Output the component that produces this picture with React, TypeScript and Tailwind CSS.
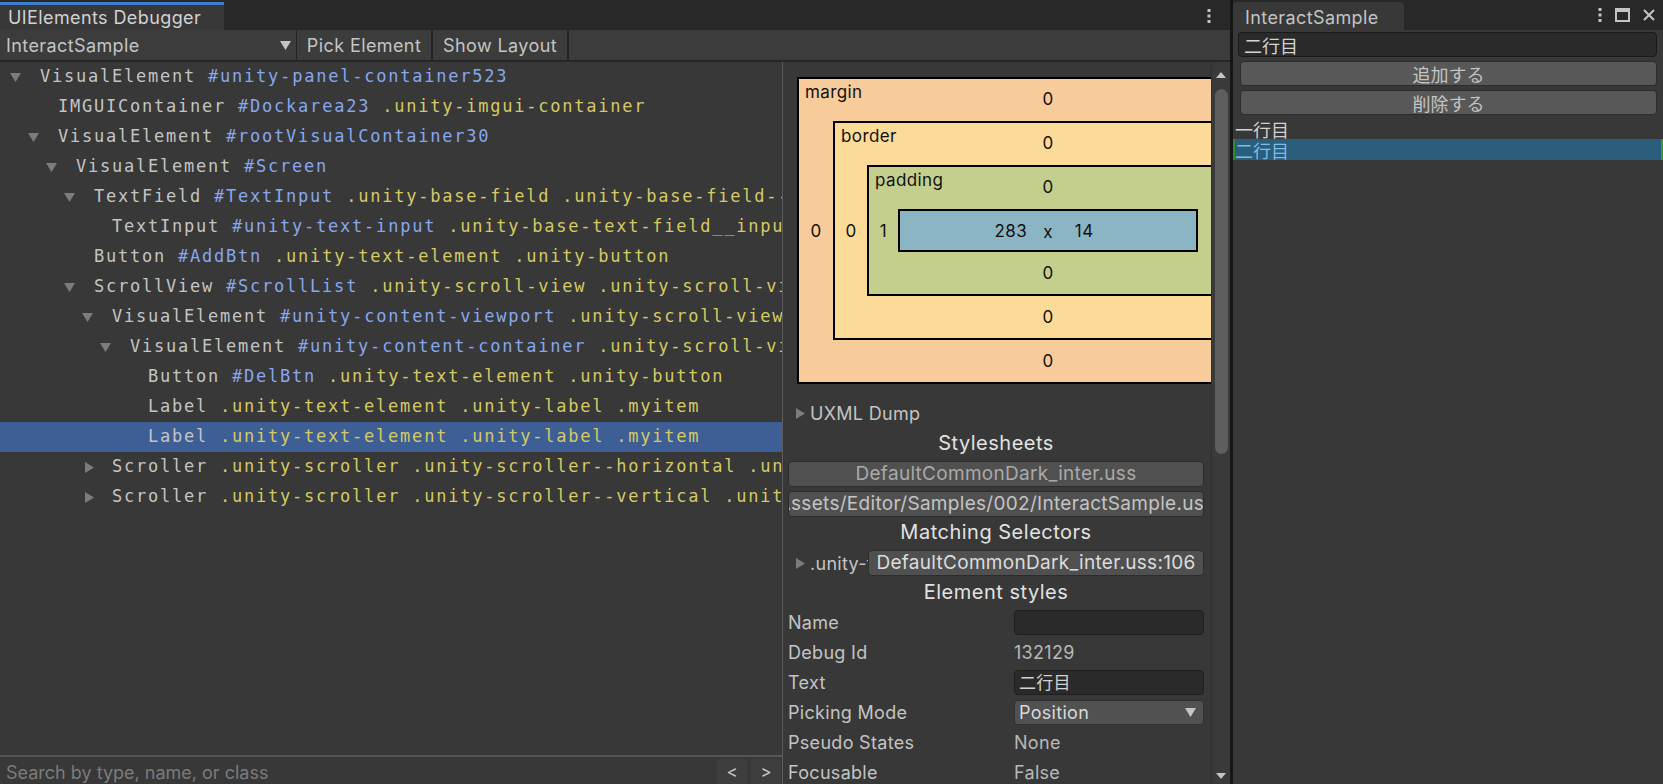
import React from 'react';

type TreeNode = {
  d: number;
  arrow?: 'down' | 'right';
  type: string;
  id?: string;
  cls?: string;
  selected?: boolean;
};

const tree: TreeNode[] = [
  { d: 0, arrow: 'down', type: 'VisualElement', id: '#unity-panel-container523' },
  { d: 1, type: 'IMGUIContainer', id: '#Dockarea23', cls: '.unity-imgui-container' },
  { d: 1, arrow: 'down', type: 'VisualElement', id: '#rootVisualContainer30' },
  { d: 2, arrow: 'down', type: 'VisualElement', id: '#Screen' },
  {
    d: 3,
    arrow: 'down',
    type: 'TextField',
    id: '#TextInput',
    cls: '.unity-base-field .unity-base-field--no-label .unity-base-text-field .unity-text-field',
  },
  { d: 4, type: 'TextInput', id: '#unity-text-input', cls: '.unity-base-text-field__input .unity-text-field__input' },
  { d: 3, type: 'Button', id: '#AddBtn', cls: '.unity-text-element .unity-button' },
  { d: 3, arrow: 'down', type: 'ScrollView', id: '#ScrollList', cls: '.unity-scroll-view .unity-scroll-view--vertical' },
  { d: 4, arrow: 'down', type: 'VisualElement', id: '#unity-content-viewport', cls: '.unity-scroll-view__content-viewport' },
  { d: 5, arrow: 'down', type: 'VisualElement', id: '#unity-content-container', cls: '.unity-scroll-view__content-container' },
  { d: 6, type: 'Button', id: '#DelBtn', cls: '.unity-text-element .unity-button' },
  { d: 6, type: 'Label', cls: '.unity-text-element .unity-label .myitem' },
  { d: 6, type: 'Label', cls: '.unity-text-element .unity-label .myitem', selected: true },
  { d: 4, arrow: 'right', type: 'Scroller', cls: '.unity-scroller .unity-scroller--horizontal .unity-scroller__horizontal' },
  { d: 4, arrow: 'right', type: 'Scroller', cls: '.unity-scroller .unity-scroller--vertical .unity-scroller__vertical' },
];

function Down({ color = '#7c7c7c' }: { color?: string }) {
  return (
    <svg width="11" height="9" viewBox="0 0 11 9" className="shrink-0">
      <path d="M0 0H11L5.5 9Z" fill={color} />
    </svg>
  );
}

function Right({ color = '#7c7c7c' }: { color?: string }) {
  return (
    <svg width="9" height="11" viewBox="0 0 9 11" className="shrink-0">
      <path d="M0 0L9 5.5L0 11Z" fill={color} />
    </svg>
  );
}

function Kebab() {
  return (
    <svg width="4" height="14" viewBox="0 0 4 14">
      <rect x="0.5" y="0" width="3" height="3" fill="#c4c4c4" />
      <rect x="0.5" y="5.5" width="3" height="3" fill="#c4c4c4" />
      <rect x="0.5" y="11" width="3" height="3" fill="#c4c4c4" />
    </svg>
  );
}

function TreeRow({ n }: { n: TreeNode }) {
  return (
    <div className={`flex h-[30px] shrink-0 items-center whitespace-pre ${n.selected ? 'bg-[#3e5f96]' : ''}`}>
      <div className="shrink-0" style={{ width: n.d * 18 }} />
      <div className={`flex w-[40px] shrink-0 items-center ${n.arrow === 'right' ? 'pl-[13px]' : 'pl-[10px]'}`}>
        {n.arrow === 'down' && <Down />}
        {n.arrow === 'right' && <Right />}
      </div>
      <span className="text-[#c4c4c4]">{n.type}</span>
      {n.id && <span className="text-[#87a7ee]"> {n.id}</span>}
      {n.cls && <span className="text-[#d5ca64]"> {n.cls}</span>}
    </div>
  );
}

function Layer({
  label,
  bg,
  side,
  vals,
  children,
}: {
  label: string;
  bg: string;
  side: string;
  vals: [string, string, string, string];
  children: React.ReactNode;
}) {
  return (
    <div className={`flex flex-col border-2 border-black ${bg}`}>
      <div className="grid h-[42px] grid-cols-[1fr_auto_1fr]">
        <span className="pl-[6px] pt-[3px]">{label}</span>
        <span className="self-center pb-[2px]">{vals[0]}</span>
        <span />
      </div>
      <div className="flex">
        <div className={`flex shrink-0 items-center justify-center ${side}`}>{vals[3]}</div>
        <div className="flex-1">{children}</div>
        <div className={`flex shrink-0 items-center justify-center ${side}`}>{vals[1]}</div>
      </div>
      <div className="flex h-[42px] items-center justify-center">{vals[2]}</div>
    </div>
  );
}

function BoxModel() {
  return (
    <div className="flex w-[502px] shrink-0 flex-col text-[17px] leading-[20px] tracking-[0.4px] text-[#111]">
      <Layer label="margin" bg="bg-[#f8cb9b]" side="w-[34px]" vals={['0', '', '0', '0']}>
        <Layer label="border" bg="bg-[#fcdb99]" side="w-[32px]" vals={['0', '', '0', '0']}>
          <Layer label="padding" bg="bg-[#c5cf8d]" side="w-[29px]" vals={['0', '', '0', '1']}>
            <div className="grid h-[43px] grid-cols-[1fr_auto_1fr] items-center border-2 border-black bg-[#8cb5c4]">
              <span className="pr-[16px] text-right">283</span>
              <span className="pt-[3px]">x</span>
              <span className="pl-[22px]">14</span>
            </div>
          </Layer>
        </Layer>
      </Layer>
    </div>
  );
}

function PropRow({ label, children }: { label: string; children: React.ReactNode }) {
  return (
    <div className="flex h-[30px] shrink-0 items-center">
      <span className="w-[226px] shrink-0 text-[#c4c4c4]">{label}</span>
      <div className="flex flex-1 items-center">{children}</div>
    </div>
  );
}

function Inspector() {
  return (
    <div className="flex min-w-0 flex-1 flex-col overflow-hidden pl-[5px] pr-[7px] text-[18px] tracking-[0.3px]">
      <div className="flex pl-[9px] pt-[15px]">
        <BoxModel />
      </div>
      <div className="mt-[14px] flex h-[30px] shrink-0 items-center gap-[5px] pl-[8px] text-[#c4c4c4]">
        <Right />
        <span>UXML Dump</span>
      </div>
      <div className="flex h-[30px] shrink-0 items-center justify-center text-[20px] tracking-[0.5px] text-[#e2e2e2]">
        Stylesheets
      </div>
      <div className="mt-[3px] flex h-[26px] shrink-0 items-center justify-center overflow-hidden whitespace-nowrap rounded-[4px] border border-[#2c2c2c] bg-[#505050] text-[19px] tracking-[0.3px] text-[#a9a9a9]">
        DefaultCommonDark_inter.uss
      </div>
      <div className="mt-[4px] flex h-[26px] shrink-0 items-center justify-center overflow-hidden whitespace-nowrap rounded-[4px] border border-[#2c2c2c] bg-[#505050] text-[19px] tracking-[0.3px] text-[#c4c4c4]">
        Assets/Editor/Samples/002/InteractSample.uss
      </div>
      <div className="flex h-[30px] shrink-0 items-center justify-center text-[20px] tracking-[0.5px] text-[#e2e2e2]">
        Matching Selectors
      </div>
      <div className="mt-[3px] flex h-[26px] shrink-0 items-center">
        <div className="flex w-[80px] shrink-0 items-center gap-[5px] overflow-hidden whitespace-nowrap pl-[8px] text-[#c4c4c4]">
          <Right />
          <span>.unity-text-element</span>
        </div>
        <div className="flex h-full flex-1 items-center justify-center overflow-hidden whitespace-nowrap rounded-[4px] border border-[#2c2c2c] bg-[#505050] text-[19px] tracking-[0.3px] text-[#dcdcdc]">
          DefaultCommonDark_inter.uss:106
        </div>
      </div>
      <div className="mt-[1px] flex h-[30px] shrink-0 items-center justify-center text-[20px] tracking-[0.5px] text-[#e2e2e2]">
        Element styles
      </div>
      <PropRow label="Name">
        <div className="h-[25px] flex-1 rounded-[4px] border border-[#1f1f1f] bg-[#2a2a2a]" />
      </PropRow>
      <PropRow label="Debug Id">
        <span className="text-[#b8b8b8]">132129</span>
      </PropRow>
      <PropRow label="Text">
        <div className="flex h-[25px] flex-1 items-center rounded-[4px] border border-[#1f1f1f] bg-[#2a2a2a] pl-[4px] font-['Noto_Sans_CJK_JP',sans-serif] text-[17px] text-[#d2d2d2]">
          二行目
        </div>
      </PropRow>
      <PropRow label="Picking Mode">
        <div className="flex h-[25px] flex-1 items-center justify-between rounded-[4px] border border-[#303030] bg-[#515151] pl-[4px] pr-[7px] text-[#d8d8d8]">
          <span>Position</span>
          <Down color="#c4c4c4" />
        </div>
      </PropRow>
      <PropRow label="Pseudo States">
        <span className="text-[#b8b8b8]">None</span>
      </PropRow>
      <PropRow label="Focusable">
        <span className="text-[#b8b8b8]">False</span>
      </PropRow>
    </div>
  );
}

function ScrollBar() {
  return (
    <div className="flex w-[19px] shrink-0 flex-col items-center border-l border-[#313131] bg-[#3a3a3a]">
      <div className="mt-[10px]">
        <svg width="10" height="6" viewBox="0 0 10 6">
          <path d="M0 6L5 0L10 6Z" fill="#c4c4c4" />
        </svg>
      </div>
      <div className="mt-[11px] h-[365px] w-[13px] rounded-full bg-[#5e5e5e]" />
      <div className="flex-1" />
      <div className="mb-[5px]">
        <svg width="10" height="6" viewBox="0 0 10 6">
          <path d="M0 0L10 0L5 6Z" fill="#c4c4c4" />
        </svg>
      </div>
    </div>
  );
}

function DebuggerWindow() {
  return (
    <div className="flex w-[1230px] shrink-0 flex-col">
      <div className="flex h-[30px] shrink-0 items-end bg-[#282828]">
        <div className="flex h-[28px] w-[224px] items-center border-t-[3px] border-[#3d7fcc] bg-[#383838] pl-[8px] text-[18px] tracking-[0.4px] text-[#d2d2d2]">
          UIElements Debugger
        </div>
        <div className="flex-1" />
        <div className="mb-[7px] mr-[19px]">
          <Kebab />
        </div>
      </div>
      <div className="flex h-[30px] shrink-0 bg-[#3c3c3c] text-[18px] tracking-[0.4px] text-[#c4c4c4]">
        <div className="flex w-[297px] items-center justify-between border-r border-[#242424] pl-[6px] pr-[5px]">
          <span>InteractSample</span>
          <Down color="#c4c4c4" />
        </div>
        <div className="flex w-[136px] items-center justify-center border-r-2 border-[#242424]">Pick Element</div>
        <div className="flex w-[136px] items-center justify-center border-r-2 border-[#242424]">Show Layout</div>
        <div className="flex-1" />
      </div>
      <div className="flex min-h-0 flex-1 border-t-2 border-[#262626] bg-[#383838]">
        <div className="flex w-[782px] shrink-0 flex-col">
          <div className="flex min-h-0 flex-1 flex-col overflow-hidden font-['DejaVu_Sans_Mono',monospace] text-[17px] tracking-[1.77px]">
            {tree.map((n, i) => (
              <TreeRow key={i} n={n} />
            ))}
          </div>
          <div className="flex h-[29px] shrink-0 items-end border-t-2 border-[#555555]">
            <span className="flex-1 self-center pl-[6px] pt-[4px] text-[18px] text-[#7b7b7b]">
              Search by type, name, or class
            </span>
            <div className="mr-[4px] flex h-[25px] w-[30px] items-center justify-center rounded-t-[3px] bg-[#3e3e3e] pt-[3px] text-[17px] text-[#c4c4c4]">
              &lt;
            </div>
            <div className="mr-[1px] flex h-[25px] w-[30px] items-center justify-center rounded-t-[3px] bg-[#3e3e3e] pt-[3px] text-[17px] text-[#c4c4c4]">
              &gt;
            </div>
          </div>
        </div>
        <div className="w-px shrink-0 bg-[#5c5c5c]" />
        <Inspector />
        <ScrollBar />
      </div>
    </div>
  );
}

function SampleWindow() {
  return (
    <div className="flex min-w-0 flex-1 flex-col">
      <div className="flex h-[30px] shrink-0 items-end bg-[#282828]">
        <div className="flex h-[28px] w-[171px] items-center rounded-t-[4px] bg-[#383838] pl-[12px] pt-[2px] text-[18px] tracking-[0.4px] text-[#c4c4c4]">
          InteractSample
        </div>
        <div className="flex-1" />
        <div className="mb-[8px] flex items-center gap-[13px] pr-[8px]">
          <Kebab />
          <svg width="15" height="14" viewBox="0 0 15 14">
            <rect x="1" y="1" width="13" height="12" fill="none" stroke="#c4c4c4" strokeWidth="2" />
            <rect x="1" y="1" width="13" height="3" fill="#c4c4c4" />
          </svg>
          <svg width="12" height="12" viewBox="0 0 12 12">
            <path d="M1 1L11 11M11 1L1 11" stroke="#c4c4c4" strokeWidth="2" />
          </svg>
        </div>
      </div>
      <div className="flex flex-1 flex-col bg-[#383838] font-['Noto_Sans_CJK_JP',sans-serif] text-[18px] leading-[20px]">
        <div className="ml-[5px] mr-[6px] mt-[2px] flex h-[25px] items-center rounded-[4px] border border-[#1a1a1a] bg-[#2a2a2a] pl-[5px] text-[#d4d4d4]">
          二行目
        </div>
        <div className="ml-[7px] mr-[6px] mt-[4px] flex h-[25px] items-center justify-center rounded-[4px] border border-[#2c2c2c] bg-[#585858] text-[#c4c4c4]">
          追加する
        </div>
        <div className="ml-[7px] mr-[6px] mt-[4px] flex h-[25px] items-center justify-center rounded-[4px] border border-[#2c2c2c] bg-[#585858] text-[#c4c4c4]">
          削除する
        </div>
        <div className="mt-[4px] flex h-[20px] items-center pl-[2px] text-[#d2d2d2]">一行目</div>
        <div className="flex h-[21px] items-center border-x-2 border-l-[#2e8a2a] border-r-[#3a9a2a] bg-[#2b5d7c] text-[#7cbde6]">
          二行目
        </div>
      </div>
    </div>
  );
}

export default function App() {
  return (
    <div className="flex h-[784px] w-[1663px] overflow-hidden bg-[#282828] font-['Inter','Noto_Sans_CJK_JP',sans-serif] text-[#c4c4c4]">
      <DebuggerWindow />
      <div className="w-[3px] shrink-0 bg-[#161616]" />
      <SampleWindow />
    </div>
  );
}
